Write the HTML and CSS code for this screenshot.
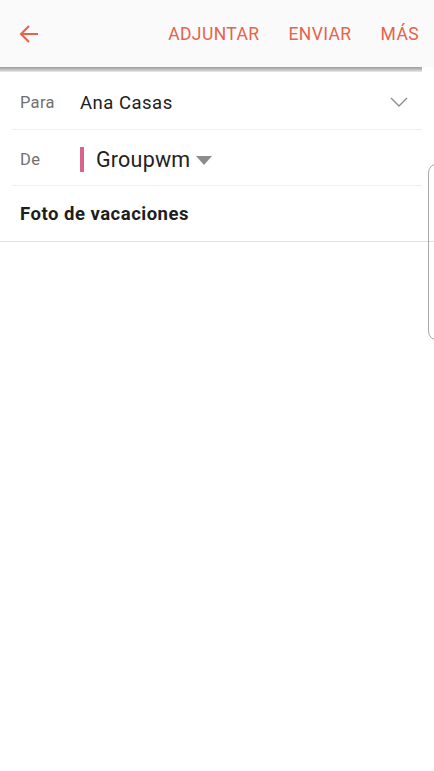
FILE: index.html
```html
<!DOCTYPE html>
<html lang="es">
<head>
<meta charset="utf-8">
<link rel="stylesheet" href="styles.css">
</head>
<body>
<div class="screen">
  <header class="topbar">
    <button class="back" aria-label="Atrás">
      <svg width="22" height="22" viewBox="0 0 22 22"><path d="M20 11H3M11 3L3 11L11 19" fill="none" stroke="#e5634c" stroke-width="2"/></svg>
    </button>
    <nav class="actions">
      <span class="action">ADJUNTAR</span>
      <span class="action">ENVIAR</span>
      <span class="action">MÁS</span>
    </nav>
  </header>
  <div class="shadow"></div>
  <section class="fields">
    <div class="row">
      <span class="label">Para</span>
      <span class="value">Ana Casas</span>
      <svg class="chev" width="18" height="10" viewBox="0 0 18 10"><path d="M1 1L9 9L17 1" fill="none" stroke="#8a8a8a" stroke-width="1.3"/></svg>
    </div>
    <div class="row">
      <span class="label">De</span>
      <span class="account"><span class="bar"></span><span class="acc-name">Groupwm</span><span class="tri"></span></span>
    </div>
    <div class="subject">Foto de vacaciones</div>
  </section>
  <div class="handle"></div>
</div>
</body>
</html>
```
FILE: styles.css
```css
* { box-sizing: border-box; }
html, body { margin: 0; padding: 0; background: #fff; }
body { font-family: Roboto, "Noto Sans", Arial, sans-serif; }
.screen { position: relative; width: 434px; height: 771px; overflow: hidden; background: #fff; }
.topbar {
  height: 67px; background: #fafafa;
  display: flex; align-items: center; justify-content: space-between;
  padding: 0 15px 0 18px;
}
.back { border: 0; background: none; padding: 0; width: 22px; height: 22px; display: flex; }
.actions { display: flex; gap: 29px; }
.action { color: #e5634c; font-size: 17.5px; letter-spacing: 0.4px; }
.shadow {
  height: 5px;
  background: linear-gradient(#9c9c9c, #c6c6c6 60%, #ececec);
  margin: 0 12px 0 0;
}
.fields { padding-top: 1px; }
.row {
  display: flex; align-items: center;
  height: 56px; margin: 0 12px; padding-top: 3px; border-bottom: 1px solid #efefef;
  position: relative;
}
.row:first-child { height: 57px; }
.label { width: 68px; padding-left: 8px; color: #707070; font-size: 16.5px; letter-spacing: 0.3px; }
.value { color: #202020; font-size: 18.5px; letter-spacing: 0.5px; flex: 1; }
.chev { margin-right: 14px; margin-top: -2px; }
.account { display: flex; align-items: center; }
.bar { width: 4px; height: 25px; background: #d9638a; margin-right: 12px; }
.acc-name { font-size: 21.5px; letter-spacing: 0.2px; color: #222; }
.tri {
  width: 0; height: 0; margin-left: 6px; margin-top: 2px;
  border-left: 8px solid transparent; border-right: 8px solid transparent;
  border-top: 9px solid #8c8c8c;
}
.subject {
  height: 56px; display: flex; align-items: center;
  padding-left: 20px; font-size: 18.5px; font-weight: 700; letter-spacing: 0.5px; color: #1e1e1e;
  border-bottom: 1px solid #e2e2e2;
}
.handle {
  position: absolute; left: 428px; top: 163px; width: 20px; height: 178px;
  border: 1.3px solid #a8a8a8; border-radius: 10px;
}
```
